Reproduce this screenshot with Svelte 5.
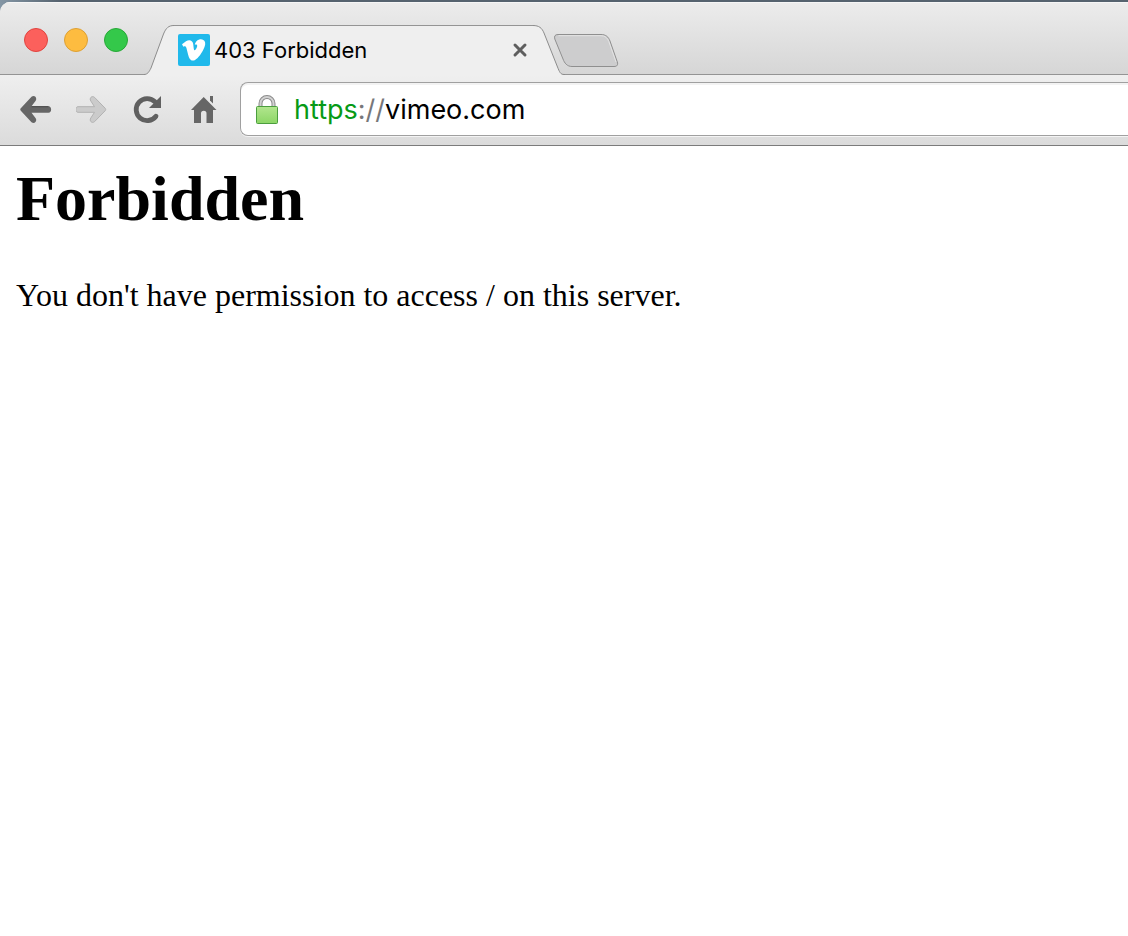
<script lang="ts">
	let host = $state('vimeo.com');

	const lights = [
		{ name: 'Close window', kind: 'close' },
		{ name: 'Minimize window', kind: 'minimize' },
		{ name: 'Zoom window', kind: 'zoom' }
	];
</script>

<div class="browser">
	<header class="window">
		<div class="tab-strip">
			<div class="lights">
				{#each lights as light}
					<button class="light {light.kind}" aria-label={light.name}></button>
				{/each}
			</div>

			<div class="tab">
				<svg class="edge" width="30" height="50" viewBox="0 0 30 50">
					<path class="fill" d="M0 50V49.5C3.500 49.500 5 47 7 43L19.500 9C22 3 24.500 .5 30 .5V50Z" />
					<path class="line" d="M0 49.5C3.500 49.500 5 47 7 43L19.500 9C22 3 24.500 .5 30 .5" />
				</svg>
				<div class="tab-body">
					<svg width="32" height="32" viewBox="0 0 32 32">
						<rect width="32" height="32" rx="2" fill="#20b9eb" />
						<path
							fill="#fff"
							d="M4 10.300L8 7.300C11 5.500 14.500 6 15.200 10C15.700 13.500 15.800 16.300 16.600 16.300C17.600 16.300 19.300 13.200 19.200 11.800C19.100 10.500 18.200 10.400 16.800 10.800C17.500 7.500 20 5.300 23 5.300C26 5.400 27.500 7.400 27.200 10.200C26.500 15.500 19.500 26.600 15 26.600C12.300 26.600 11 24 10.200 21L8.500 14.300C8 12.500 7.500 11.800 5.400 12.800Z"
						/>
					</svg>
					<span class="title">403 Forbidden</span>
					<button class="close-tab" aria-label="Close tab">
						<svg width="16" height="16" viewBox="0 0 16 16">
							<path d="M3 3L13 13M13 3L3 13" stroke="#5e5e5e" stroke-width="3" stroke-linecap="round" />
						</svg>
					</button>
				</div>
				<svg class="edge" width="32" height="50" viewBox="0 0 32 50">
					<path class="fill" d="M0 .5C6 .5 9 3 11 8L24.500 42C26.500 47 27.500 49.500 31 49.5H32V50H0Z" />
					<path class="line" d="M0 .5C6 .5 9 3 11 8L24.500 42C26.500 47 27.500 49.500 31 49.5H32" />
				</svg>
			</div>

			<button class="new-tab" aria-label="New tab">
				<svg width="66" height="34" viewBox="0 0 66 34">
					<path
						d="M4 .5H47C52 .5 54.500 3 56 7L63.300 28C64.200 30.800 63.200 32.500 60 32.500H18C13 32.500 10.500 29 9 25L.8 5C0 2.200 1 .5 4 .5Z"
						fill="#cdcdce"
						stroke="#8f8f8f"
					/>
					<path d="M4.500 1.700H47C51 1.700 53.500 4 54.800 7.500L62 28" fill="none" stroke="#e4e4e4" />
				</svg>
			</button>
		</div>

		<div class="toolbar">
			<button class="tool" aria-label="Back">
				<svg width="32" height="32" viewBox="0 0 32 32">
					<path
						d="M.8 15.300L11.500 3.800C14.500 1.500 17.700 5 15.500 8L11.500 13.200H28.500C32 13.200 32 19.800 28.500 19.800H11.500L15.500 25C17.700 28 14.500 31.500 11.500 29.200L.8 17.700Q-.3 16.500 .8 15.300Z"
						fill="#666"
					/>
					<path d="M11.500 13.700H28.500" stroke="#484848" />
				</svg>
			</button>
			<button class="tool" aria-label="Forward" disabled>
				<svg width="32" height="32" viewBox="0 0 32 32">
					<path
						d="M29.200 15.300L18.500 4.300C15.800 2.200 13 5.300 14.800 8L18.500 13.700H2C-1 13.700 -1 19.300 2 19.300H18.500L14.800 25C13 27.700 15.800 30.800 18.500 28.700L29.200 17.700Q30.200 16.500 29.200 15.300Z"
						fill="#cbcbcb"
						stroke="#b2b2b2"
					/>
				</svg>
			</button>
			<button class="tool" aria-label="Reload">
				<svg width="32" height="32" viewBox="0 0 32 32">
					<path
						d="M24 23.200A11 11 0 1 1 23 8.800"
						fill="none"
						stroke="#606060"
						stroke-width="4.800"
						stroke-linecap="round"
					/>
					<path d="M29 3V15H17Z" fill="#606060" />
				</svg>
			</button>
			<button class="tool" aria-label="Home">
				<svg width="32" height="32" viewBox="0 0 32 32" fill="#666">
					<path d="M15.700 4L28.500 17H25V30H18.500V20.500A2.750 2.750 0 0 0 13 20.500V30H6V17H3Z" />
					<path d="M22 3H25V10.500L22 7.500Z" />
				</svg>
			</button>

			<div class="address">
				<svg width="24" height="32" viewBox="0 0 24 32">
					<defs>
						<linearGradient id="lock-body" x1="0" y1="0" x2="0" y2="1">
							<stop offset="0" stop-color="#b2e68e" />
							<stop offset="1" stop-color="#8cd666" />
						</linearGradient>
					</defs>
					<path d="M5.500 15V10.500A6.500 6.500 0 0 1 18.500 10.500V15" fill="none" stroke="#8b8b8b" stroke-width="4" />
					<path d="M5.500 15V10.500A6.500 6.500 0 0 1 18.500 10.500V15" fill="none" stroke="#d2d2d2" stroke-width="2" />
					<rect x="1.500" y="13.500" width="21" height="17" rx="1" fill="url(#lock-body)" stroke="#4b9e3e" />
				</svg>
				<div class="url">
					<label for="url"><span class="scheme">https</span>://</label>
					<input id="url" type="text" spellcheck="false" autocomplete="off" bind:value={host} />
				</div>
			</div>
		</div>
	</header>

	<main>
		<h1>Forbidden</h1>
		<p>You don't have permission to access / on this server.</p>
	</main>
</div>

<style>
	:global(body) {
		margin: 0;
		background: #fff;
	}
	button {
		margin: 0;
		padding: 0;
		border: none;
		background: none;
	}
	svg {
		display: block;
		flex: none;
	}
	.browser {
		padding-top: 2px;
		background: linear-gradient(to right, #8496a5, #56636f 60px) no-repeat top / 100% 12px;
		font-family: Inter, 'Liberation Sans', sans-serif;
	}
	.window {
		overflow: hidden;
		border-radius: 10px 0 0 0;
		border-bottom: 1px solid #7b7b7b;
		background: #e6e6e6;
	}

	/* tabs */
	.tab-strip {
		display: flex;
		align-items: flex-end;
		height: 72px;
		padding-left: 24px;
		border-bottom: 1px solid #949494;
		background: linear-gradient(#ececec, #d6d6d6);
		box-shadow: inset 0 1px #f6f6f6;
	}
	.lights {
		display: flex;
		gap: 16px;
		margin-right: 16px;
		padding-bottom: 22px;
	}
	.light {
		box-sizing: border-box;
		width: 24px;
		height: 24px;
		border: 1px solid;
		border-radius: 50%;
	}
	.close {
		border-color: #e0443f;
		background: #fc605c;
	}
	.minimize {
		border-color: #dda034;
		background: #fdbc40;
	}
	.zoom {
		border-color: #27a837;
		background: #34c84a;
	}
	.tab {
		display: flex;
		flex: 0 1 421px;
		margin-bottom: -1px;
	}
	.edge .fill {
		fill: #efefef;
	}
	.edge .line {
		fill: none;
		stroke: #8c8c8c;
	}
	.tab-body {
		display: flex;
		flex: 1;
		align-items: center;
		box-sizing: border-box;
		min-width: 0;
		height: 50px;
		padding: 0 5px 2px 4px;
		border-top: 1px solid #949494;
		background: #efefef;
	}
	.title {
		flex: 1;
		overflow: hidden;
		margin-left: 4px;
		color: #000;
		font-size: 22px;
		line-height: 32px;
		white-space: nowrap;
	}
	.new-tab {
		margin: 0 0 6px -11px;
	}

	/* toolbar */
	.toolbar {
		display: flex;
		align-items: center;
		padding: 7px 0 9px 8px;
		background: linear-gradient(#efefef, #dbdbdb);
	}
	.tool {
		display: flex;
		flex: none;
		justify-content: center;
		width: 56px;
	}
	.address {
		display: flex;
		flex: 1;
		align-items: center;
		box-sizing: border-box;
		min-width: 0;
		height: 54px;
		margin-left: 8px;
		padding-left: 14px;
		border: 1px solid #a0a0a0;
		border-right: none;
		border-radius: 8px 0 0 8px;
		background: #fff;
		box-shadow: inset 0 2px #f3f3f3, 0 1px #f4f4f4;
	}
	.url {
		display: flex;
		flex: 1;
		align-items: baseline;
		min-width: 0;
		margin-left: 15px;
		padding-top: 2px;
		font-size: 27px;
		line-height: 36px;
	}
	label {
		color: #77777a;
	}
	.scheme {
		color: #079a16;
	}
	input {
		flex: 1;
		min-width: 0;
		padding: 0;
		border: none;
		outline: none;
		background: none;
		color: #000;
		font: inherit;
	}

	/* page */
	main {
		padding: 16px;
		background: #fff;
		color: #000;
		font-family: 'Liberation Serif', serif;
	}
	h1 {
		margin: 0;
		font-size: 64px;
		line-height: 74px;
	}
	p {
		margin: 41px 0 0;
		font-size: 32px;
		line-height: 36px;
	}
</style>
